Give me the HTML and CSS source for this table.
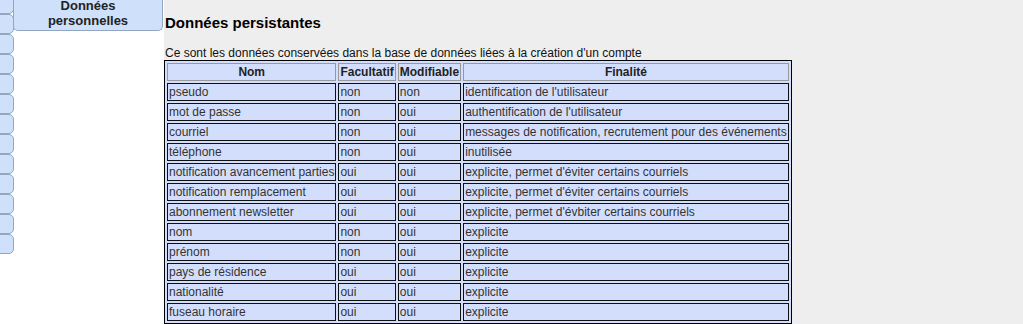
FILE: index.html
```html
<!DOCTYPE html>
<html lang="fr">
<head>
<meta charset="utf-8">
<title>Données personnelles</title>
<link rel="stylesheet" href="styles.css">
</head>
<body>
<div class="page">
  <aside class="sidebar">
    <div class="tabs-col">
      <div class="tab"></div><div class="tab"></div><div class="tab"></div><div class="tab"></div>
      <div class="tab"></div><div class="tab"></div><div class="tab"></div><div class="tab"></div>
      <div class="tab"></div><div class="tab"></div><div class="tab"></div><div class="tab"></div>
      <div class="tab"></div>
    </div>
    <div class="active-tab">Données<br>personnelles</div>
  </aside>
  <main class="content">
    <h3 class="title">Données persistantes</h3>
    <p class="intro">Ce sont les données conservées dans la base de données liées à la création d'un compte</p>
    <table class="data">
      <thead>
        <tr><th>Nom</th><th>Facultatif</th><th>Modifiable</th><th>Finalité</th></tr>
      </thead>
      <tbody>
        <tr><td>pseudo</td><td>non</td><td>non</td><td>identification de l'utilisateur</td></tr>
        <tr><td>mot de passe</td><td>non</td><td>oui</td><td>authentification de l'utilisateur</td></tr>
        <tr><td>courriel</td><td>non</td><td>oui</td><td>messages de notification, recrutement pour des événements</td></tr>
        <tr><td>téléphone</td><td>non</td><td>oui</td><td>inutilisée</td></tr>
        <tr><td>notification avancement parties</td><td>oui</td><td>oui</td><td>explicite, permet d'éviter certains courriels</td></tr>
        <tr><td>notification remplacement</td><td>oui</td><td>oui</td><td>explicite, permet d'éviter certains courriels</td></tr>
        <tr><td>abonnement newsletter</td><td>oui</td><td>oui</td><td>explicite, permet d'évbiter certains courriels</td></tr>
        <tr><td>nom</td><td>non</td><td>oui</td><td>explicite</td></tr>
        <tr><td>prénom</td><td>non</td><td>oui</td><td>explicite</td></tr>
        <tr><td>pays de résidence</td><td>oui</td><td>oui</td><td>explicite</td></tr>
        <tr><td>nationalité</td><td>oui</td><td>oui</td><td>explicite</td></tr>
        <tr><td>fuseau horaire</td><td>oui</td><td>oui</td><td>explicite</td></tr>
      </tbody>
    </table>
  </main>
</div>
</body>
</html>
```
FILE: styles.css
```css
html, body {
  margin: 0;
  padding: 0;
  height: 100%;
}
body {
  font-family: "Liberation Sans", Arial, sans-serif;
  color: #222;
  background: #eeeeee;
  overflow: hidden;
}
.page {
  display: flex;
  align-items: stretch;
  min-height: 100%;
}
.sidebar {
  width: 164px;
  flex: none;
  background: #ffffff;
  display: flex;
  align-items: flex-start;
  overflow: hidden;
}
.tabs-col {
  width: 13px;
  flex: none;
  margin-top: -6px;
  display: flex;
  flex-direction: column;
}
.tab {
  height: 18px;
  width: 22px;
  margin-left: -10px;
  background: #cfe0fb;
  border: 1px solid #94a6bf;
  border-radius: 0 5px 5px 0;
}
.active-tab {
  width: 148px;
  margin-top: -6px;
  padding: 4px 0 2px;
  background: #cfe0fb;
  border: 1px solid #94a6bf;
  border-top: none;
  border-radius: 0 0 5px 5px;
  font-weight: bold;
  font-size: 13px;
  line-height: 15px;
  text-align: center;
  color: #222;
}
.content {
  flex: 1;
  background: #eeeeee;
}
.title {
  margin: 14px 0 0 1px;
  font-size: 15px;
  line-height: 18px;
  font-weight: bold;
  color: #000;
}
.intro {
  margin: 14px 0 0 1px;
  font-size: 12px;
  line-height: 13px;
  padding-top: 1px;
  color: #111;
}
.data {
  border: 1px solid #000;
  border-spacing: 2px;
  background: #d3defc;
  font-size: 12px;
  line-height: 14px;
}
.data th, .data td {
  background: #d3defc;
  padding: 1px;
  text-align: left;
  white-space: nowrap;
}
.data td {
  border: 1px solid #111;
  color: #333;
}
.data th {
  border: 1px solid #999;
  text-align: center;
  font-weight: bold;
  color: #222;
}
```
